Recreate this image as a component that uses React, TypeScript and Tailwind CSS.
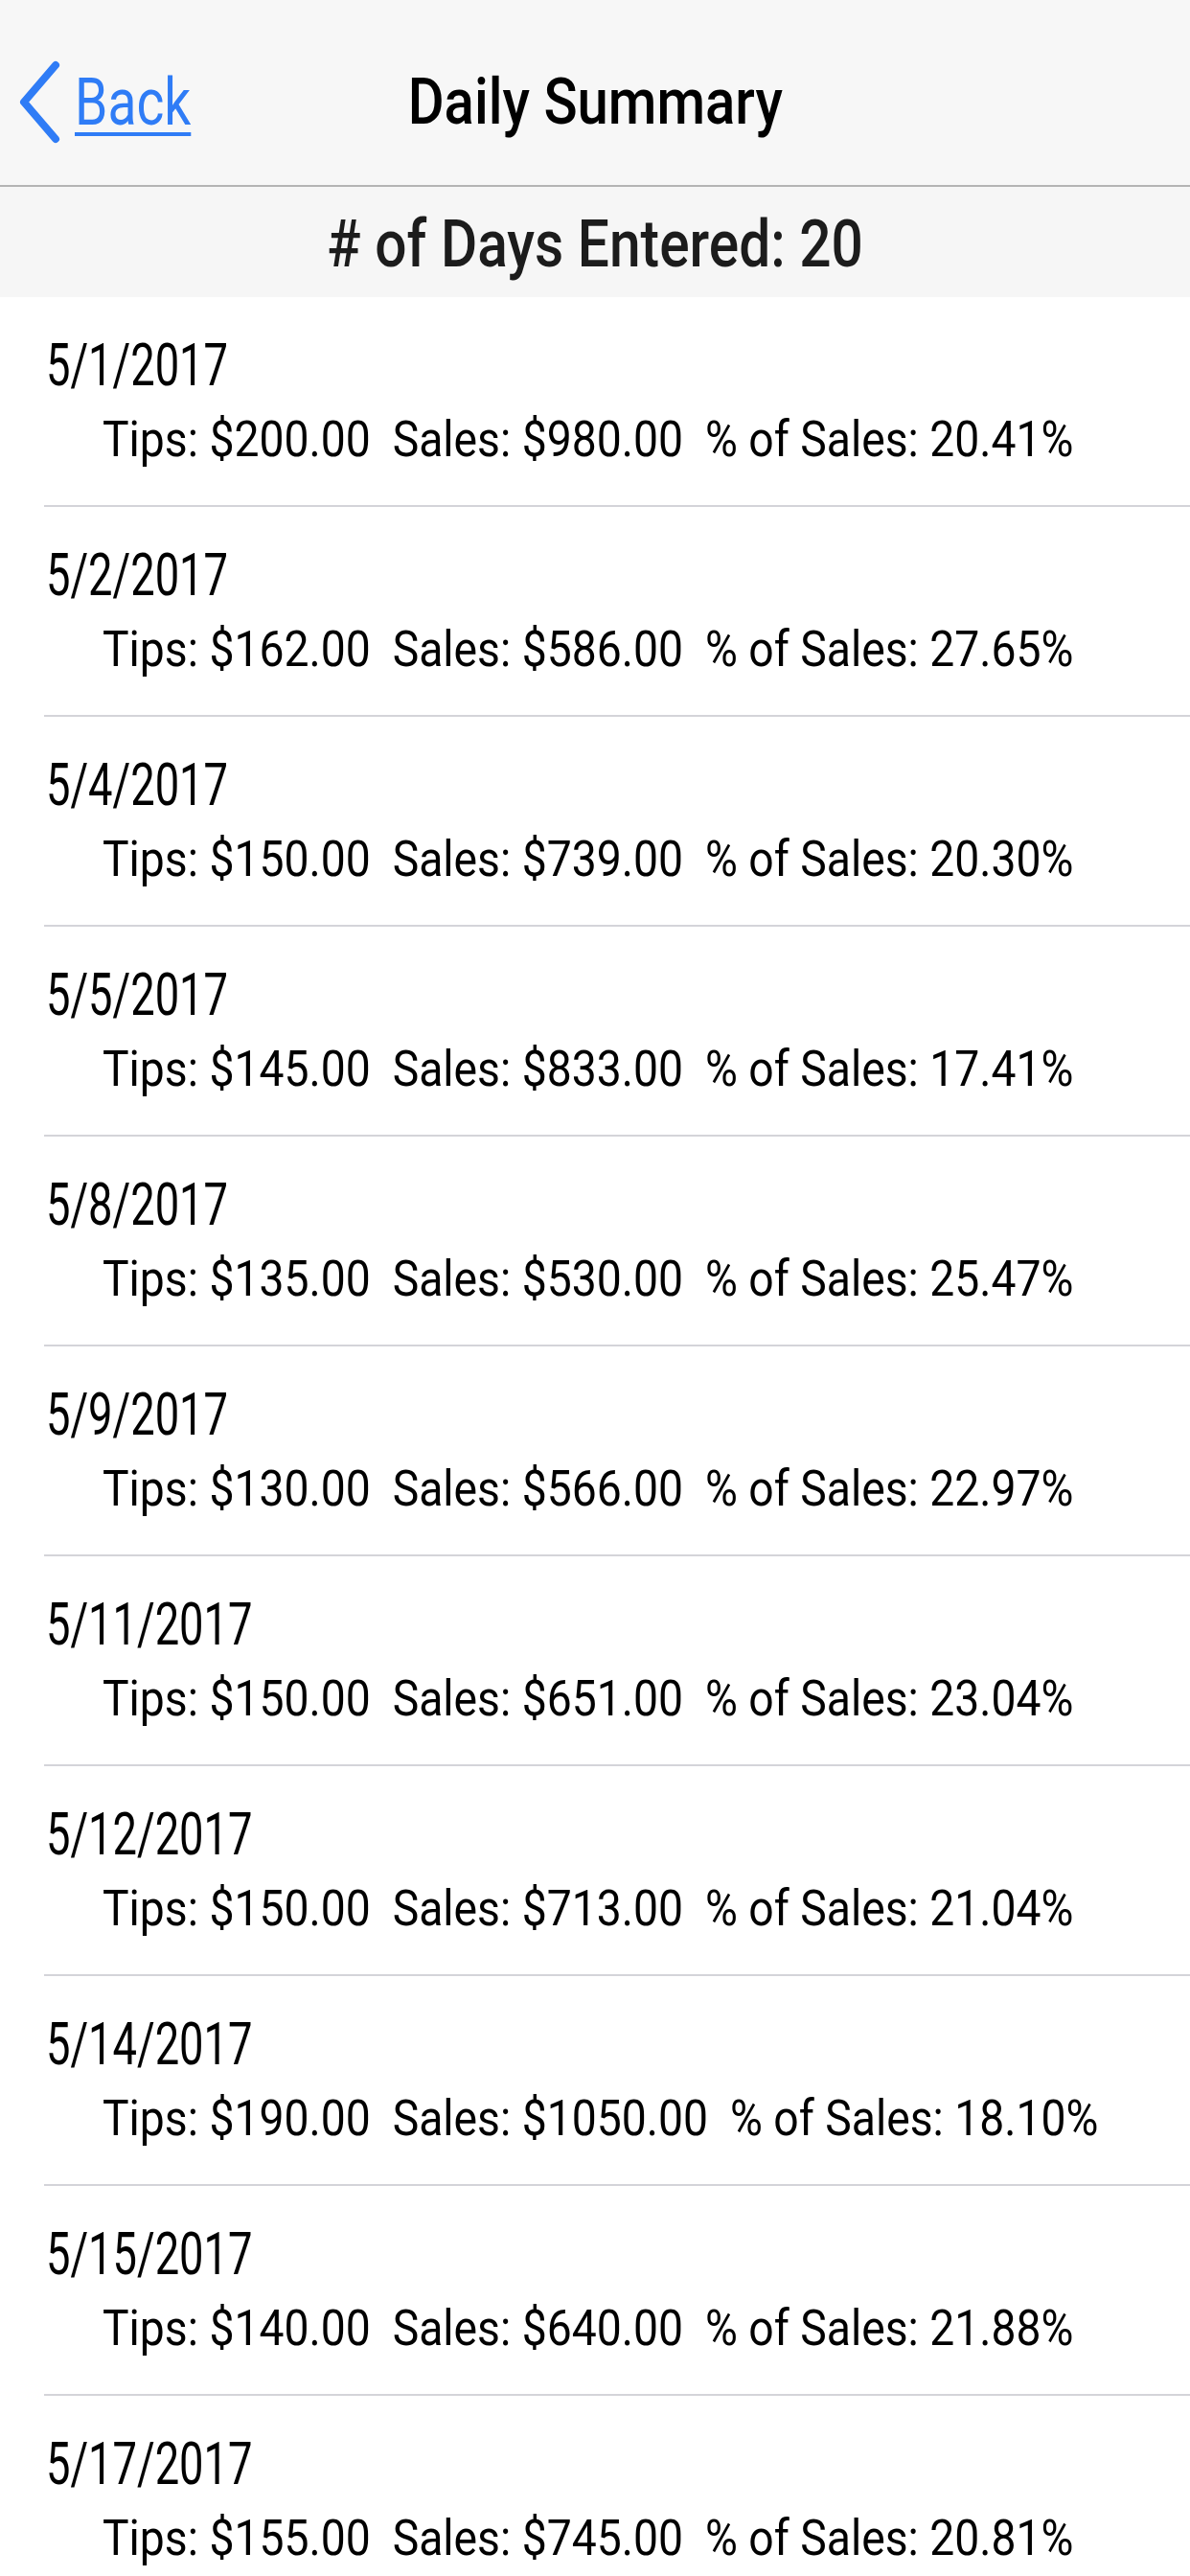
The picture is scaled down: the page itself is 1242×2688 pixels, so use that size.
import React from 'react';

type Day = { date: string; tips: string; sales: string; pct: string };

const days: Day[] = [
  { date: '5/1/2017', tips: '200.00', sales: '980.00', pct: '20.41' },
  { date: '5/2/2017', tips: '162.00', sales: '586.00', pct: '27.65' },
  { date: '5/4/2017', tips: '150.00', sales: '739.00', pct: '20.30' },
  { date: '5/5/2017', tips: '145.00', sales: '833.00', pct: '17.41' },
  { date: '5/8/2017', tips: '135.00', sales: '530.00', pct: '25.47' },
  { date: '5/9/2017', tips: '130.00', sales: '566.00', pct: '22.97' },
  { date: '5/11/2017', tips: '150.00', sales: '651.00', pct: '23.04' },
  { date: '5/12/2017', tips: '150.00', sales: '713.00', pct: '21.04' },
  { date: '5/14/2017', tips: '190.00', sales: '1050.00', pct: '18.10' },
  { date: '5/15/2017', tips: '140.00', sales: '640.00', pct: '21.88' },
  { date: '5/17/2017', tips: '155.00', sales: '745.00', pct: '20.81' },
];

function ChevronLeft() {
  return (
    <svg width="50" height="96" viewBox="0 0 50 96" fill="none" className="shrink-0">
      <polyline
        points="42,9 9,47.5 42,86"
        stroke="#2f7cf6"
        strokeWidth="8"
        strokeLinecap="round"
        strokeLinejoin="round"
      />
    </svg>
  );
}

export default function App() {
  return (
    <div className="h-[2688px] overflow-hidden bg-white font-[Roboto,sans-serif] text-black">
      {/* Nav bar */}
      <header className="h-[195px] bg-[#f7f7f7] border-b-2 border-[#b4b4b4] pt-[59px]">
        <div className="grid grid-cols-[1fr_auto_1fr] h-[80px] items-center">
          <div className="flex items-center pl-[16px]">
            <ChevronLeft />
            <span className="ml-[12px] inline-block origin-left scale-x-[0.8] text-[69px] leading-[80px] text-[#2f7cf6] underline decoration-[4px] underline-offset-[8px]">
              Back
            </span>
          </div>
          <h1 className="inline-block scale-x-[0.88] text-[66px] leading-[80px] font-medium whitespace-nowrap">
            Daily Summary
          </h1>
          <div />
        </div>
      </header>

      {/* Count */}
      <div className="h-[115px] bg-[#f6f6f6] pt-[20px] text-center">
        <span className="inline-block scale-x-[0.85] text-[69px] leading-[80px] font-medium text-[#1c1c1c] whitespace-nowrap">
          # of Days Entered: {days.length + 9}
        </span>
      </div>

      {/* List */}
      <ul>
        {days.map((d) => (
          <li key={d.date} className="ml-[46px] h-[219px] border-b-2 border-[#d4d4d9] pt-[34px]">
            <div className="text-[62px] leading-[74px] pl-[2px]">
              <span className="inline-block origin-left scale-x-[0.73]">{d.date}</span>
            </div>
            <div className="mt-[10px] text-[52px] leading-[62px] pl-[61px] whitespace-pre">
              <span className="inline-block origin-left scale-x-[0.89]">
                {`Tips: $${d.tips}  Sales: $${d.sales}  % of Sales: ${d.pct}%`}
              </span>
            </div>
          </li>
        ))}
      </ul>
    </div>
  );
}
